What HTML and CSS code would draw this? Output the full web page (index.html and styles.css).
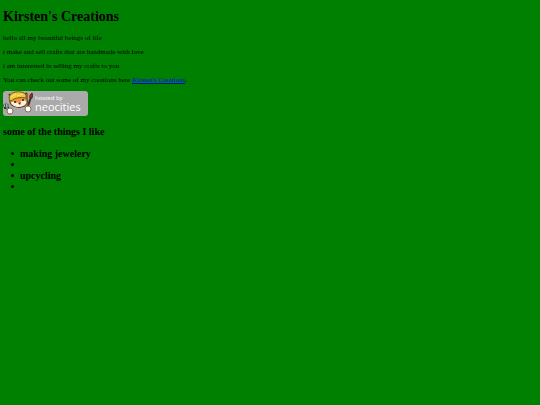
FILE: index.html
```html
<!DOCTYPE html>
<html lang="en">

<head>
    <meta charset="UTF-8">
    <meta name="viewport" content="width=device-width, initial-scale=1.0">
    <title>Kirsten's Creations</title>
    <link rel="stylesheet" href="styles.css">
</head>

<body>
    <h1>Kirsten's Creations</h1>

    <p>hello all my beautiful beings of life</p>
    <p>i make and sell crafts that are handmade with love</p>
    <p>i am interested in selling my crafts to you</p>
    <p>You can check out some of my creations here <a href="#">Kirsten's Creations</a>.</p>

    <a class="badge" href="https://neocities.org" aria-label="hosted by neocities">
        <svg width="85" height="25" viewBox="0 0 85 25">
            <rect width="85" height="25" rx="3" fill="#a9aaa9"/>
            <!-- cat -->
            <path d="M7 8 L6 3 L10 4 Q15 1 20 3 L24 2 L24 8 Q26 12 22 15 Q16 18 10 15 Q6 13 7 8Z" fill="#ee8f3c" stroke="#4a3518"/>
            <path d="M8 11 Q11 10 13 12 L17 11 Q20 8 23 10 Q24 13 20 15 Q15 17 11 15 Q8 13 8 11Z" fill="#fff2dc"/>
            <path d="M6 8 Q6 2 13 1 Q20 0 23 4 L23 7 Q14 5 8 10Z" fill="#efc83b" stroke="#7c6010"/>
            <path d="M8 6 L13 3 M14 5 L20 3" stroke="#fbe780" fill="none"/>
            <circle cx="12" cy="11" r="1" fill="#222"/>
            <circle cx="20" cy="9" r="1" fill="#222"/>
            <path d="M15 12 L18 11 L17 14Z" fill="#6b2915"/>
            <!-- fork -->
            <path d="M1 13 L2 17 L5 17 L5 13 M3 12 L4 17 L8 23" stroke="#333b3b" stroke-width="2" fill="none"/>
            <path d="M1 13 L2 16 M3 12 L4 17 L7 22 M5 13 L5 16" stroke="#bac4c5" fill="none"/>
            <!-- brush -->
            <path d="M28 6 L24 18" stroke="#40291c" stroke-width="2"/>
            <path d="M27 7 Q26 4 29 2 Q30 4 29 7Z" fill="#c62422" stroke="#50201c"/>
            <!-- paws -->
            <circle cx="7" cy="20" r="3" fill="#fff" stroke="#8a7050"/>
            <circle cx="25" cy="18" r="3" fill="#fff" stroke="#8a7050"/>
            <text class="badge-small" x="32" y="9">hosted by</text>
            <text class="badge-name" x="32" y="20">neocities</text>
        </svg>
    </a>

    <h2>some of the things I like</h2>
    <ul>
        <li>making jewelery</li>
        <li></li>
        <li>upcycling</li>
        <li></li>
    </ul>
</body>

</html>
```
FILE: styles.css
```css
body {
    margin: 9px 3px;
    background-color: green;
    color: black;
    font-family: "Liberation Serif", "Times New Roman", serif;
    font-size: 7px;
    line-height: 8px;
}

h1 {
    margin: 0 0 9px;
    font-size: 14px;
    line-height: 16px;
}

p {
    margin: 6px 0;
}

a {
    color: #0000ee;
}

.badge {
    display: block;
    width: fit-content;
    margin: 7px 0 10px;
}

.badge svg {
    display: block;
}

.badge text {
    fill: white;
    font-family: "Open Sans", sans-serif;
}

.badge .badge-small {
    font-size: 6px;
}

.badge .badge-name {
    font-size: 11px;
}

h2,
ul {
    font-size: 10px;
    font-weight: bold;
    line-height: 11px;
}

h2 {
    margin: 0 0 11px;
}

ul {
    margin: 0;
    padding-left: 8px;
    list-style: none;
}

li {
    display: flex;
    align-items: center;
    gap: 6px;
    min-height: 11px;
}

li::before {
    content: "";
    width: 3px;
    height: 3px;
    border-radius: 50%;
    background-color: black;
}
```
